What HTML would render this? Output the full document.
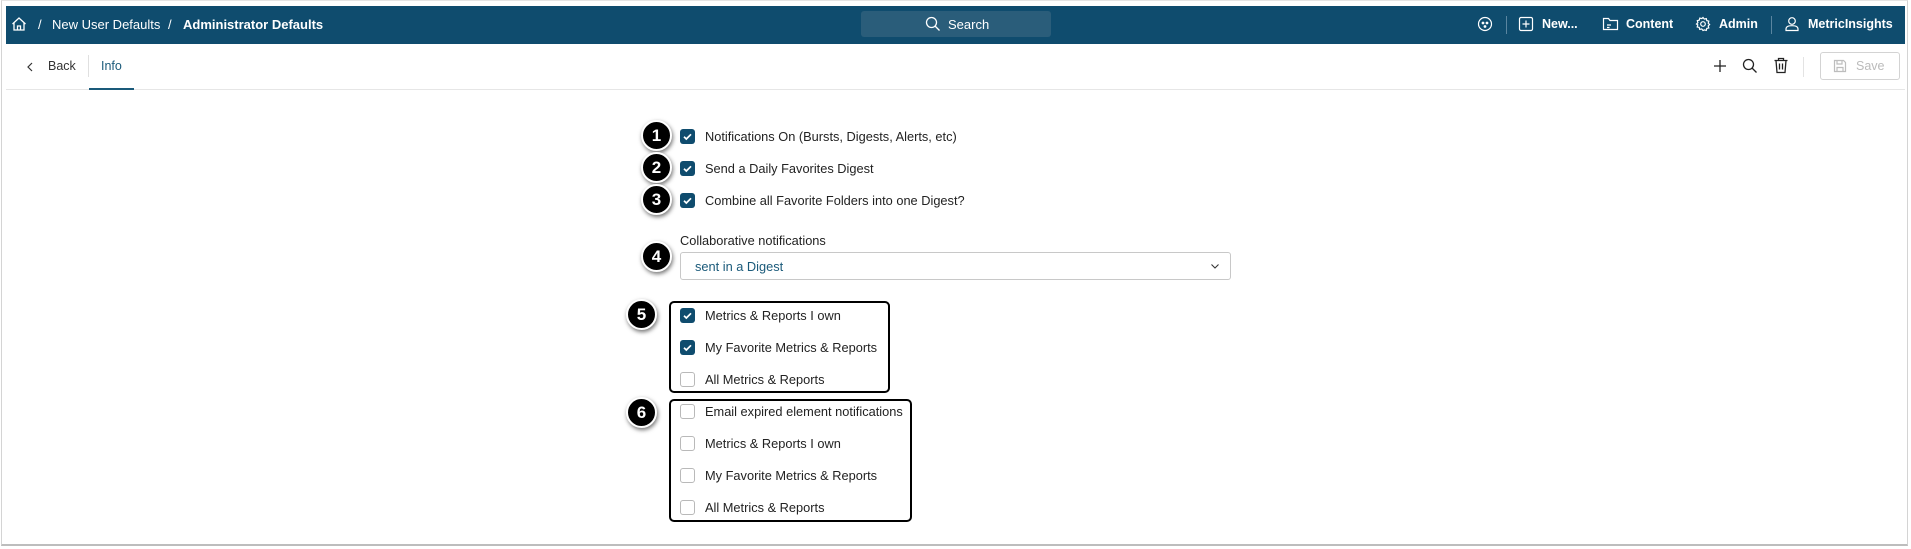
<!DOCTYPE html>
<html><head><meta charset="utf-8"><style>
*{box-sizing:border-box;margin:0;padding:0}
body{width:1911px;height:549px;background:#fff;font-family:"Liberation Sans",sans-serif;position:relative;overflow:hidden;color:#222}
.a{position:absolute}
.frame{left:1px;top:0;width:1907px;height:546px;border:1px solid #d4d4d4;border-top:1px solid #e4e4e4;border-bottom:2px solid #bdbdbd}
.bar{left:6px;top:6px;width:1899px;height:38px;background:#0f4c6e}
.wt{color:#fff;font-size:13px;top:17px;white-space:nowrap}
.rb{font-size:12.5px;font-weight:bold;top:17px}
.cb{width:15px;height:15px;border-radius:3px;left:680px}
.on{background:#0f4c6e}
.off{border:1px solid #b9b9b9;background:#fff}
.lbl{left:705px;font-size:12.8px;color:#222;white-space:nowrap}
.badge{width:31px;height:31px;border-radius:50%;background:#000;border:2px solid #fff;box-shadow:1px 2px 4px rgba(0,0,0,.55);color:#fff;font-weight:bold;font-size:17px;text-align:center;line-height:27px}
.box{border:2px solid #000;border-radius:5px}
</style></head><body>
<div class="a frame"></div>
<div class="a bar"></div>
<svg class="a" style="left:11px;top:16px" width="16" height="16" viewBox="0 0 16 16" fill="none" stroke="#fff" stroke-width="1.3"><path d="M1.5 8 8 2l6.5 6M3 7v7h10V7M6.5 14v-4h3v4"/></svg>
<div class="a wt" style="left:38px">/</div>
<div class="a wt" style="left:52px">New User Defaults</div>
<div class="a wt" style="left:168px">/</div>
<div class="a wt" style="left:183px;font-weight:bold">Administrator Defaults</div>
<div class="a" style="left:861px;top:11px;width:190px;height:26px;background:#2a5d7a;border-radius:3px"></div>
<svg class="a" style="left:925px;top:16px" width="16" height="16" viewBox="0 0 16 16" fill="none" stroke="#fff" stroke-width="1.3"><circle cx="6.5" cy="6.5" r="5"/><path d="M10 10l4.5 4.5"/></svg>
<div class="a wt" style="left:948px">Search</div>
<svg class="a" style="left:1477px;top:16px" width="16" height="16" viewBox="0 0 16 16" fill="none" stroke="#fff" stroke-width="1.2"><circle cx="8" cy="8" r="6.5"/><circle cx="6" cy="7" r=".8" fill="#fff"/><circle cx="10" cy="7" r=".8" fill="#fff"/><circle cx="8" cy="10.5" r=".8" fill="#fff"/></svg>
<div class="a" style="left:1506px;top:16px;width:1px;height:18px;background:#5a85a0"></div>
<svg class="a" style="left:1518px;top:16px" width="16" height="16" viewBox="0 0 16 16" fill="none" stroke="#fff" stroke-width="1.2"><rect x="1.5" y="1.5" width="13" height="13" rx="1.5"/><path d="M8 4.5v7M4.5 8h7"/></svg>
<div class="a wt rb" style="left:1542px">New...</div>
<svg class="a" style="left:1602px;top:16px" width="17" height="16" viewBox="0 0 17 16" fill="none" stroke="#fff" stroke-width="1.2"><path d="M1.5 2.5h5l1.5 2h7.5v9h-14z"/><path d="M5 9h4M5 11.5h2.5"/></svg>
<div class="a wt rb" style="left:1626px">Content</div>
<svg class="a" style="left:1695px;top:16px" width="16" height="16" viewBox="0 0 16 16" fill="none" stroke="#fff" stroke-width="1.2"><circle cx="8" cy="8" r="2.3"/><path d="M8 1.5l1.3 1.6 2-.5.5 2 2 .6-.6 2 1.4 1.3-1.4 1.4.6 2-2 .5-.5 2-2-.5L8 14.5l-1.3-1.6-2 .5-.5-2-2-.5.6-2L1.5 8l1.4-1.3-.6-2 2-.6.5-2 2 .5z"/></svg>
<div class="a wt rb" style="left:1719px">Admin</div>
<div class="a" style="left:1771px;top:16px;width:1px;height:18px;background:#5a85a0"></div>
<svg class="a" style="left:1784px;top:16px" width="16" height="16" viewBox="0 0 16 16" fill="none" stroke="#fff" stroke-width="1.2"><circle cx="8" cy="5" r="3.3"/><path d="M2 14.5v-1.5c0-2 2-3.3 6-3.3s6 1.3 6 3.3v1.5z"/></svg>
<div class="a wt rb" style="left:1808px">MetricInsights</div>

<svg class="a" style="left:26px;top:62px" width="8" height="10" viewBox="0 0 8 10" fill="none" stroke="#333" stroke-width="1.2"><path d="M6 1 2 5l4 4"/></svg>
<div class="a" style="left:48px;top:59px;font-size:12.5px;color:#333">Back</div>
<div class="a" style="left:88px;top:55px;width:1px;height:22px;background:#e0e0e0"></div>
<div class="a" style="left:101px;top:59px;font-size:12.5px;color:#1a5a7a">Info</div>
<div class="a" style="left:6px;top:89px;width:1899px;height:1px;background:#e6e6e6"></div>
<div class="a" style="left:89px;top:88px;width:45px;height:2px;background:#1a5a7a"></div>
<svg class="a" style="left:1713px;top:59px" width="14" height="14" viewBox="0 0 14 14" stroke="#222" stroke-width="1.3"><path d="M7 1v12M1 7h12"/></svg>
<svg class="a" style="left:1742px;top:58px" width="16" height="16" viewBox="0 0 16 16" fill="none" stroke="#222" stroke-width="1.3"><circle cx="6.5" cy="6.5" r="5"/><path d="M10 10l4.5 4.5"/></svg>
<svg class="a" style="left:1773px;top:57px" width="16" height="17" viewBox="0 0 16 17" fill="none" stroke="#222" stroke-width="1.3"><path d="M1.5 3.5h13M5.5 3.5V1.5h5v2M3 3.5l1 12h8l1-12M6.5 6.5v6M9.5 6.5v6"/></svg>
<div class="a" style="left:1803px;top:57px;width:1px;height:20px;background:#e3e3e3"></div>
<div class="a" style="left:1820px;top:52px;width:80px;height:28px;border:1px solid #d3d3d3;border-radius:3px"></div>
<svg class="a" style="left:1833px;top:59px" width="14" height="14" viewBox="0 0 14 14" fill="none" stroke="#bdbdbd" stroke-width="1.2"><path d="M1.5 1.5h9l2 2v9h-11z"/><path d="M4 1.5v3.5h5V1.5M4 12.5V8.5h6v4"/></svg>
<div class="a" style="left:1856px;top:59px;font-size:12.5px;color:#bbb">Save</div>

<svg width="0" height="0" style="position:absolute"><defs><symbol id="ck" viewBox="0 0 15 15"><path d="M4 7.8l2.3 2.2L11 5.3" fill="none" stroke="#fff" stroke-width="1.7"/></symbol></defs></svg>
<div class="a cb on" style="top:129px"><svg width="15" height="15"><use href="#ck"/></svg></div>
<div class="a lbl" style="top:129px">Notifications On (Bursts, Digests, Alerts, etc)</div>
<div class="a cb on" style="top:161px"><svg width="15" height="15"><use href="#ck"/></svg></div>
<div class="a lbl" style="top:161px">Send a Daily Favorites Digest</div>
<div class="a cb on" style="top:193px"><svg width="15" height="15"><use href="#ck"/></svg></div>
<div class="a lbl" style="top:193px">Combine all Favorite Folders into one Digest?</div>

<div class="a lbl" style="left:680px;top:233px">Collaborative notifications</div>
<div class="a" style="left:680px;top:252px;width:551px;height:28px;border:1px solid #c8c8c8;border-radius:3px"></div>
<div class="a" style="left:695px;top:259px;font-size:12.8px;color:#1a5a7a">sent in a Digest</div>
<svg class="a" style="left:1210px;top:262px" width="10" height="8" viewBox="0 0 10 8" fill="none" stroke="#333" stroke-width="1.1"><path d="M1.5 2.5 5 6l3.5-3.5"/></svg>

<div class="a box" style="left:669px;top:301px;width:221px;height:92px"></div>
<div class="a cb on" style="top:308px"><svg width="15" height="15"><use href="#ck"/></svg></div>
<div class="a lbl" style="top:308px">Metrics &amp; Reports I own</div>
<div class="a cb on" style="top:340px"><svg width="15" height="15"><use href="#ck"/></svg></div>
<div class="a lbl" style="top:340px">My Favorite Metrics &amp; Reports</div>
<div class="a cb off" style="top:372px"></div>
<div class="a lbl" style="top:372px">All Metrics &amp; Reports</div>

<div class="a box" style="left:669px;top:399px;width:243px;height:123px"></div>
<div class="a cb off" style="top:404px"></div>
<div class="a lbl" style="top:404px">Email expired element notifications</div>
<div class="a cb off" style="top:436px"></div>
<div class="a lbl" style="top:436px">Metrics &amp; Reports I own</div>
<div class="a cb off" style="top:468px"></div>
<div class="a lbl" style="top:468px">My Favorite Metrics &amp; Reports</div>
<div class="a cb off" style="top:500px"></div>
<div class="a lbl" style="top:500px">All Metrics &amp; Reports</div>

<div class="a badge" style="left:641px;top:120px">1</div>
<div class="a badge" style="left:641px;top:152px">2</div>
<div class="a badge" style="left:641px;top:184px">3</div>
<div class="a badge" style="left:641px;top:241px">4</div>
<div class="a badge" style="left:626px;top:299px">5</div>
<div class="a badge" style="left:626px;top:397px">6</div>
</body></html>
